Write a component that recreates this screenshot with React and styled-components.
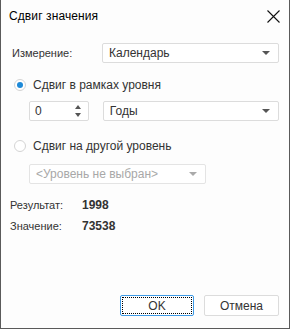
import React from 'react';
import styled, { createGlobalStyle } from 'styled-components';

const GlobalStyle = createGlobalStyle`
  html, body {
    margin: 0;
    padding: 0;
    background: #ffffff;
  }
  * {
    box-sizing: border-box;
  }
`;

const Dialog = styled.div`
  width: 290px;
  height: 329px;
  display: flex;
  flex-direction: column;
  background: #fdfdfd;
  border: 1px solid #5a5a5a;
  border-top: none;
  font-family: 'Liberation Sans', Arial, sans-serif;
  font-size: 11px;
  color: #333;
`;

const TitleBar = styled.div`
  height: 32px;
  display: flex;
  align-items: center;
  justify-content: space-between;
  padding: 0 9px 0 8px;
`;

const Title = styled.span`
  font-size: 12px;
  color: #000;
  letter-spacing: 0.1px;
`;

const CloseButton = styled.div`
  width: 14px;
  height: 14px;
  display: flex;
  align-items: center;
  justify-content: center;
`;

const Body = styled.div`
  flex: 1;
  display: flex;
  flex-direction: column;
  padding: 0 10px 12px 8px;
`;

const FieldRow = styled.div`
  display: flex;
  align-items: center;
  height: 20px;
  margin-top: ${(p) => p.$top || 0}px;
  padding-left: ${(p) => p.$indent || 0}px;
`;

const Label = styled.span`
  width: ${(p) => p.$width || 'auto'};
  flex-shrink: 0;
`;

const Combo = styled.div`
  width: ${(p) => p.$width}px;
  height: 20px;
  display: flex;
  align-items: center;
  justify-content: space-between;
  padding: 0 8px 0 6px;
  border: 1px solid ${(p) => (p.$disabled ? '#e4e4e4' : '#dcdcdc')};
  border-radius: 2px;
  background: #fff;
  color: ${(p) => (p.$disabled ? '#a8a8a8' : '#333')};
  font-size: 12px;
`;

const Arrow = styled.span`
  width: 0;
  height: 0;
  border-left: 4px solid transparent;
  border-right: 4px solid transparent;
  border-top: 4px solid ${(p) => (p.$disabled ? '#aaa' : '#555')};
`;

const Spinner = styled.div`
  width: 60px;
  height: 20px;
  display: flex;
  align-items: center;
  justify-content: space-between;
  padding: 0 7px 0 5px;
  border: 1px solid #dcdcdc;
  border-radius: 2px;
  background: #fff;
  font-size: 12px;
  margin-right: 14px;
`;

const SpinArrows = styled.div`
  display: flex;
  flex-direction: column;
  gap: 4px;
`;

const SpinTri = styled.span`
  width: 0;
  height: 0;
  border-left: 3.5px solid transparent;
  border-right: 3.5px solid transparent;
  ${(p) => (p.$up ? 'border-bottom: 4px solid #555;' : 'border-top: 4px solid #555;')}
`;

const RadioRow = styled.label`
  display: flex;
  align-items: center;
  height: 14px;
  margin-top: ${(p) => p.$top}px;
  padding-left: 5px;
  font-size: 12px;
  color: #333;
`;

const RadioCircle = styled.span`
  width: 12px;
  height: 12px;
  border-radius: 50%;
  border: 1px solid #d4d4d4;
  background: #fff;
  display: flex;
  align-items: center;
  justify-content: center;
  margin-right: 7px;
  &::after {
    content: '';
    width: 6px;
    height: 6px;
    border-radius: 50%;
    background: ${(p) => (p.$checked ? '#1e8ad8' : 'transparent')};
  }
`;

const InfoRow = styled.div`
  display: flex;
  align-items: center;
  height: 14px;
  margin-top: ${(p) => p.$top}px;
  padding-left: 1px;
`;

const Value = styled.span`
  font-weight: bold;
  font-size: 12px;
  color: #333;
`;

const Footer = styled.div`
  margin-top: auto;
  display: flex;
  justify-content: flex-end;
  gap: 10px;
`;

const Button = styled.div`
  width: ${(p) => p.$width}px;
  height: 21px;
  display: flex;
  align-items: center;
  justify-content: center;
  position: relative;
  border: 1px solid ${(p) => (p.$primary ? '#3d9ae6' : '#dcdcdc')};
  border-radius: 2px;
  background: #fff;
  font-size: 12px;
  color: #333;
  ${(p) =>
    p.$primary &&
    `&::after {
      content: '';
      position: absolute;
      inset: 1px;
      border: 1px dotted #000;
    }`}
`;

export default function App() {
  return (
    <>
      <GlobalStyle />
      <Dialog>
        <TitleBar>
          <Title>Сдвиг значения</Title>
          <CloseButton>
            <svg width="13" height="13" viewBox="0 0 13 13">
              <path d="M0.5 0.5 L12.5 12.5 M12.5 0.5 L0.5 12.5" stroke="#111" strokeWidth="1.1" />
            </svg>
          </CloseButton>
        </TitleBar>
        <Body>
          <FieldRow $top={11} $indent={3}>
            <Label $width="90px">Измерение:</Label>
            <Combo $width={177}>
              <span>Календарь</span>
              <Arrow />
            </Combo>
          </FieldRow>

          <RadioRow $top={15}>
            <RadioCircle $checked />
            Сдвиг в рамках уровня
          </RadioRow>

          <FieldRow $top={9} $indent={20}>
            <Spinner>
              <span>0</span>
              <SpinArrows>
                <SpinTri $up />
                <SpinTri />
              </SpinArrows>
            </Spinner>
            <Combo $width={177}>
              <span>Годы</span>
              <Arrow />
            </Combo>
          </FieldRow>

          <RadioRow $top={18}>
            <RadioCircle />
            Сдвиг на другой уровень
          </RadioRow>

          <FieldRow $top={11} $indent={20}>
            <Combo $width={177} $disabled>
              <span>&lt;Уровень не выбран&gt;</span>
              <Arrow $disabled />
            </Combo>
          </FieldRow>

          <InfoRow $top={14}>
            <Label $width="72px">Результат:</Label>
            <Value>1998</Value>
          </InfoRow>
          <InfoRow $top={7}>
            <Label $width="72px">Значение:</Label>
            <Value>73538</Value>
          </InfoRow>

          <Footer>
            <Button $width={74} $primary>OK</Button>
            <Button $width={75}>Отмена</Button>
          </Footer>
        </Body>
      </Dialog>
    </>
  );
}
